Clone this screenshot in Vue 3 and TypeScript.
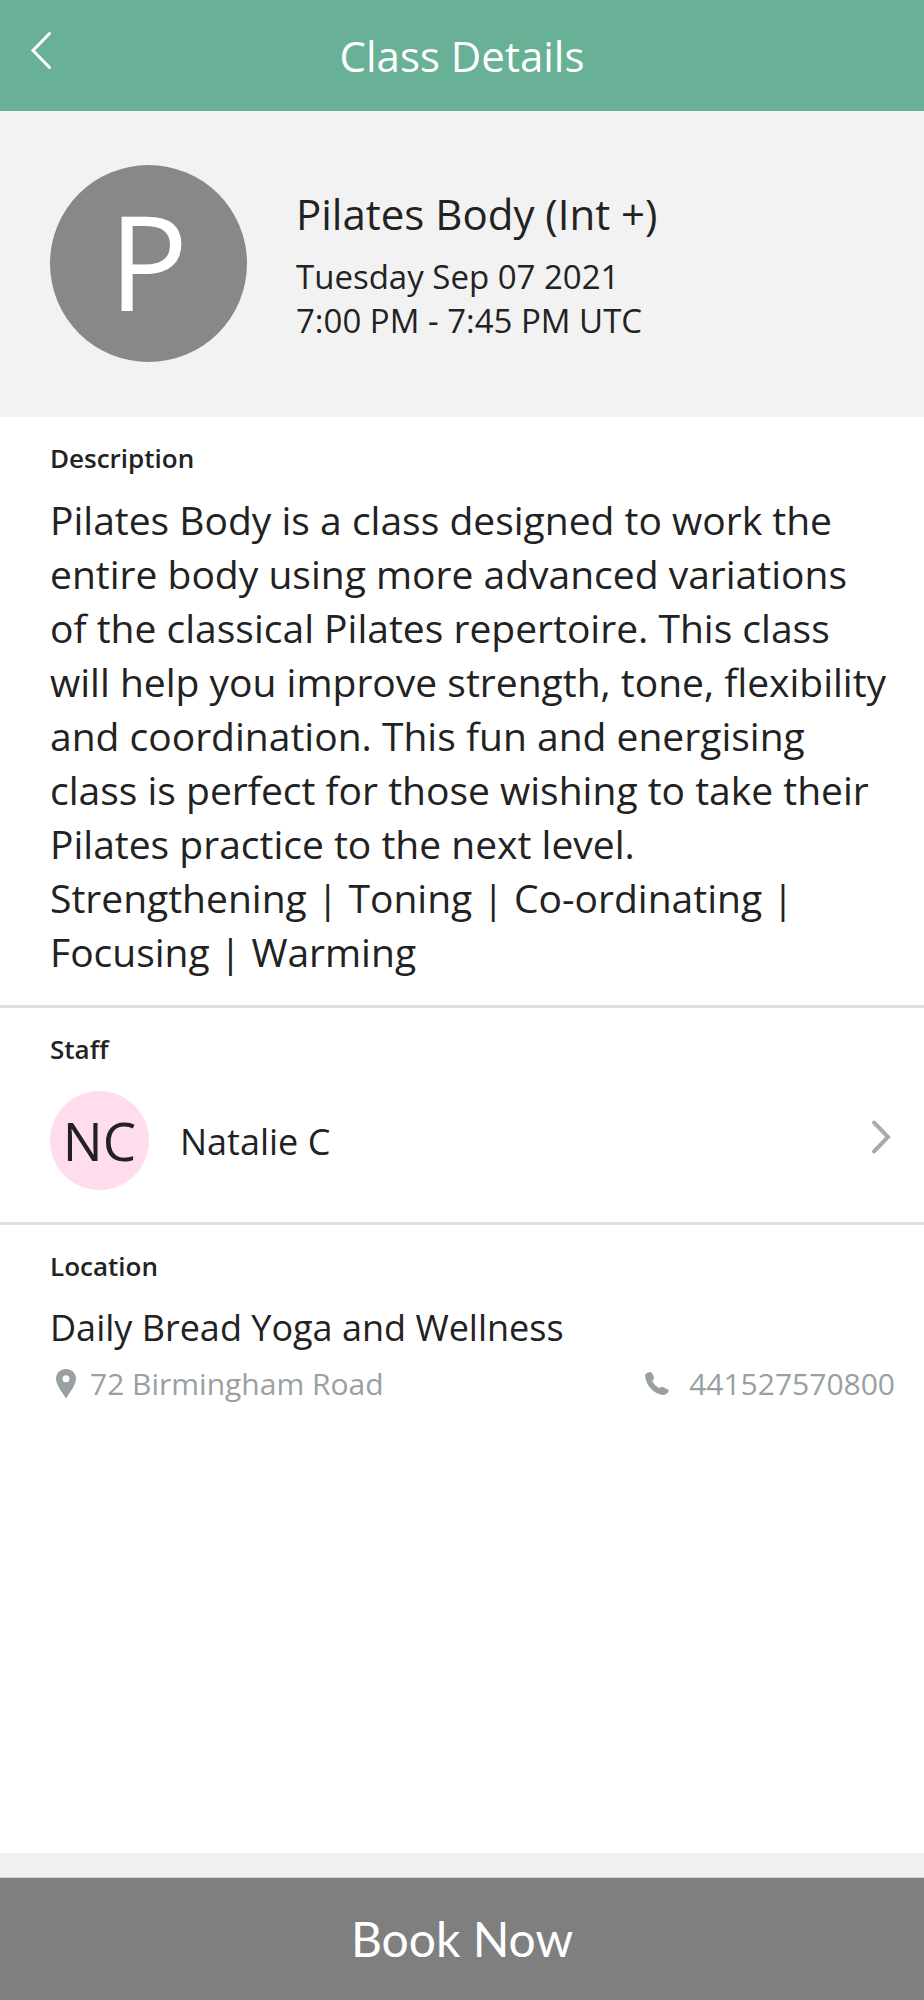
<script setup lang="ts">
interface StaffMember {
  initials: string
  name: string
}

const session = {
  initial: 'P',
  title: 'Pilates Body (Int +)',
  date: 'Tuesday Sep 07 2021',
  time: '7:00 PM - 7:45 PM UTC',
  description: [
    'Pilates Body is a class designed to work the entire body using more advanced variations of the classical Pilates repertoire. This class will help you improve strength, tone, flexibility and coordination. This fun and energising class is perfect for those wishing to take their Pilates practice to the next level.',
    'Strengthening | Toning | Co-ordinating | Focusing | Warming',
  ],
}

const staff: StaffMember[] = [{ initials: 'NC', name: 'Natalie C' }]

const location = {
  name: 'Daily Bread Yoga and Wellness',
  address: '72 Birmingham Road',
  phone: '441527570800',
}
</script>

<template>
  <div class="screen">
    <header class="topbar">
      <button class="back" type="button" aria-label="Back">
        <svg width="24" height="40" viewBox="0 0 24 40" aria-hidden="true">
          <path d="M19.5 3.5 3 20.5l16.5 17" />
        </svg>
      </button>
      <h1>Class Details</h1>
    </header>

    <main>
      <section class="hero">
        <div class="avatar avatar-large" aria-hidden="true">{{ session.initial }}</div>
        <div class="summary">
          <h2>{{ session.title }}</h2>
          <p>{{ session.date }}</p>
          <p>{{ session.time }}</p>
        </div>
      </section>

      <section class="block description">
        <h3>Description</h3>
        <p v-for="paragraph in session.description" :key="paragraph">{{ paragraph }}</p>
      </section>

      <section class="block staff">
        <h3>Staff</h3>
        <button v-for="member in staff" :key="member.name" class="member" type="button">
          <span class="avatar avatar-small" aria-hidden="true">{{ member.initials }}</span>
          <span class="member-name">{{ member.name }}</span>
          <svg class="chevron" width="24" height="44" viewBox="0 0 24 44" aria-hidden="true">
            <path d="M3 3.5 17 18 3 32.500" />
          </svg>
        </button>
      </section>

      <section class="block location">
        <h3>Location</h3>
        <p class="place">{{ location.name }}</p>
        <div class="contact">
          <a href="#map">
            <svg width="20" height="30" viewBox="0 0 20 30" aria-hidden="true">
              <path
                fill-rule="evenodd"
                d="M10 0C4.300 0 0 4.300 0 9.700 0 15.500 6 23 10 29.500 14 23 20 15.500 20 9.700 20 4.300 15.700 0 10 0Zm0 6.300a3.500 3.500 0 1 1 0 7 3.500 3.500 0 0 1 0-7Z"
              />
            </svg>
            <span>{{ location.address }}</span>
          </a>
          <a class="phone" :href="`tel:${location.phone}`">
            <svg width="24" height="24" viewBox="0 0 24 24" aria-hidden="true">
              <path
                d="M0 3C1 1.500 3 .4 5 0Q6.400 0 7 1L9 5.500Q9.400 6.600 8.500 7.400L7.200 8.800C8.500 12 11 14.700 14.500 16L16 15Q16.800 14.400 17.800 15L23 17.600Q24 18.300 23.600 19.200 22 22.500 18 23C9 22 .5 13.500 0 3Z"
              />
            </svg>
            <span>{{ location.phone }}</span>
          </a>
        </div>
      </section>
    </main>

    <footer>
      <button class="book" type="button">Book Now</button>
    </footer>
  </div>
</template>

<style>
body {
  margin: 0;
}
</style>

<style scoped>
.screen {
  display: flex;
  flex-direction: column;
  min-height: 100vh;
  background: #fff;
  color: #222;
  font-family: "Open Sans", "Noto Sans", sans-serif;
}

h1,
h2,
h3,
p {
  margin: 0;
  font-weight: 400;
}

button {
  margin: 0;
  padding: 0;
  border: 0;
  background: none;
  color: inherit;
  font: inherit;
  cursor: pointer;
}

.topbar {
  display: grid;
  grid-template-columns: 1fr auto 1fr;
  align-items: center;
  height: 111px;
  background: #68b096;
  color: #fff;
}

.topbar h1 {
  font-size: 42px;
  line-height: 58px;
}

.back {
  justify-self: start;
  align-self: start;
  display: flex;
  padding: 30px;
}

.back path {
  fill: none;
  stroke: #fff;
  stroke-width: 3;
  stroke-linecap: round;
}

main {
  flex: 1;
}

.hero {
  display: flex;
  align-items: center;
  gap: 49px;
  padding: 54px 29px 55px 50px;
  background: #f2f2f2;
}

.avatar {
  display: flex;
  flex: none;
  align-items: center;
  justify-content: center;
  box-sizing: border-box;
  border-radius: 50%;
}

.avatar-large {
  width: 197px;
  height: 197px;
  padding-bottom: 8px;
  background: #888;
  color: #fff;
  font-size: 132px;
  line-height: 180px;
}

.avatar-small {
  width: 99px;
  height: 99px;
  background: #ffdcee;
  font-size: 53px;
  line-height: 72px;
}

.summary h2 {
  margin-bottom: 12px;
  font-size: 42px;
  line-height: 58px;
}

.summary p {
  font-size: 33px;
  line-height: 44px;
}

.block {
  padding: 23px 29px 26px 50px;
}

.block + .block {
  border-top: 3px solid #e0e0e0;
}

.block h3 {
  margin-bottom: 17px;
  font-size: 26px;
  font-weight: 600;
  line-height: 36px;
}

.description {
  padding-right: 35px;
}

.description p {
  font-size: 39px;
  line-height: 54px;
}

.staff {
  padding-bottom: 32px;
}

.staff h3 {
  margin-bottom: 24px;
}

.member {
  display: flex;
  align-items: center;
  gap: 31px;
  width: 100%;
  text-align: left;
}

.member-name {
  flex: 1;
  padding-top: 3px;
  font-size: 36px;
  line-height: 50px;
}

.chevron path {
  fill: none;
  stroke: #aaa;
  stroke-width: 4;
  stroke-linecap: round;
}

.location h3 {
  margin-bottom: 19px;
}

.place {
  font-size: 36px;
  line-height: 50px;
}

.contact {
  display: flex;
  flex-wrap: wrap;
  justify-content: space-between;
  margin-top: 10px;
  padding-left: 6px;
}

.contact a {
  display: flex;
  align-items: center;
  gap: 14px;
  color: #98a0a3;
  font-size: 30px;
  line-height: 42px;
  text-decoration: none;
}

.contact .phone {
  gap: 20px;
}

.contact path {
  fill: #98a0a3;
}

footer {
  padding-top: 24px;
  background: #f1f1f1;
}

.book {
  display: block;
  width: 100%;
  height: 123px;
  border-top: 1px solid #d0d0d0;
  background: #7f7f7f;
  color: #fff;
  font-family: Lato, "Open Sans", sans-serif;
  font-size: 48px;
  line-height: 58px;
}
</style>
